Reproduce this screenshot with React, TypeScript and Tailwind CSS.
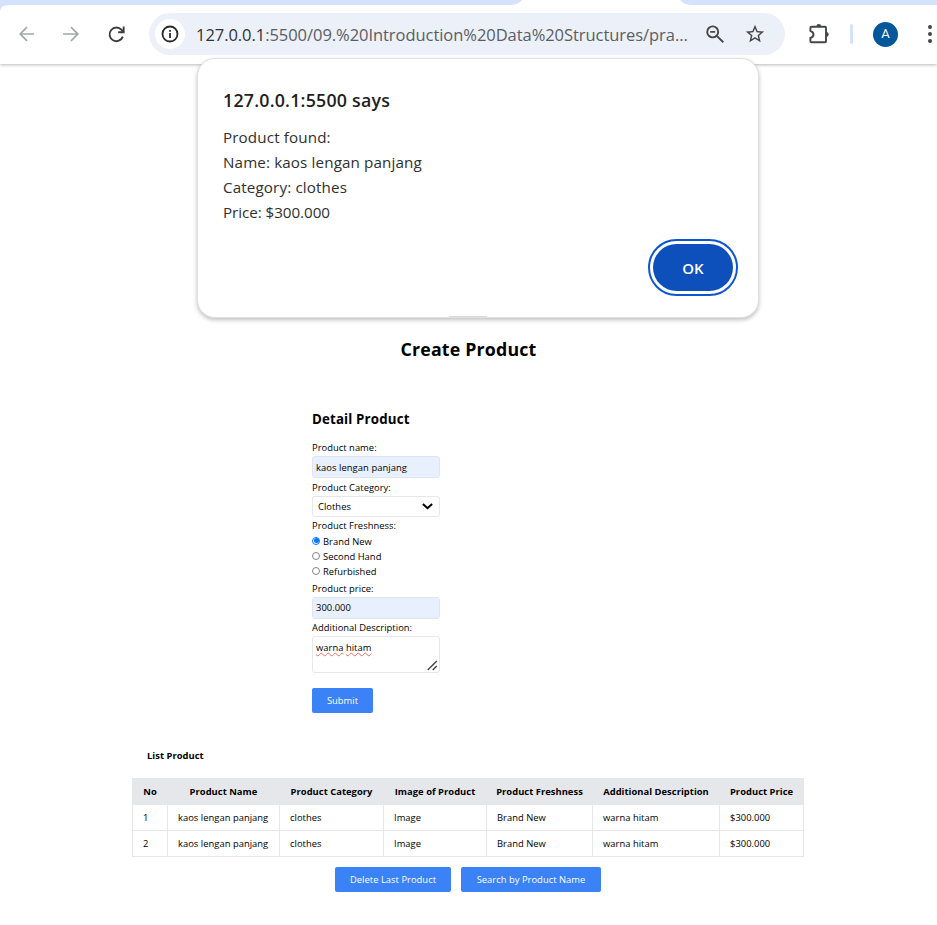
import React from "react";

const head = ["No", "Product Name", "Product Category", "Image of Product", "Product Freshness", "Additional Description", "Product Price"];
const rows = [
  ["1", "kaos lengan panjang", "clothes", "Image", "Brand New", "warna hitam", "$300.000"],
  ["2", "kaos lengan panjang", "clothes", "Image", "Brand New", "warna hitam", "$300.000"],
];

function Toolbar() {
  return (
    <header className="h-16 bg-white shadow-[0_1px_3px_rgba(0,0,0,0.28)]">
      <div className="flex h-[5px] justify-between">
        <svg width="522" height="14" viewBox="0 0 522 14" className="shrink-0">
          <path d="M0 0H522Q518 5 510 5H9Q0 5 0 12Z" fill="#d3e3fd" />
        </svg>
        <svg width="257" height="5" viewBox="0 0 257 5" className="shrink-0">
          <path d="M0 0Q4 5 12 5H257V0Z" fill="#d3e3fd" />
        </svg>
      </div>
      <div className="flex h-[58px] items-center">
        <svg className="ml-[19px] shrink-0" width="16" height="16" viewBox="0 0 16 16" fill="none" stroke="#a5a6a7" strokeWidth="1.7">
          <path d="M15 8H1.6M8 1.2L1.2 8L8 14.8" />
        </svg>
        <svg className="ml-[28px] shrink-0" width="16" height="16" viewBox="0 0 16 16" fill="none" stroke="#a5a6a7" strokeWidth="1.7">
          <path d="M0 8H14.4M8 1.2L14.8 8L8 14.8" />
        </svg>
        <svg className="ml-[29px] mr-[1px] shrink-0" width="17" height="17" viewBox="0 0 18 18" fill="none" stroke="#3c3d3e" strokeWidth="2">
          <path d="M15.7 11.2A7.2 7.2 0 1 1 14.4 4.2L15.8 6" />
          <path d="M16.6 0.6V6.6H10.8" />
        </svg>
        <div className="ml-[23px] flex h-[42px] w-[636px] shrink-0 items-center rounded-full bg-[#ecf0f9] pl-[6px]">
          <div className="flex size-[30px] shrink-0 items-center justify-center rounded-full bg-white">
            <svg width="18" height="18" viewBox="0 0 18 18" fill="none" stroke="#28292b" strokeWidth="1.8">
              <circle cx="9" cy="9" r="7.5" />
              <path d="M9 8V13M9 5V6.8" />
            </svg>
          </div>
          <div className="ml-[11px] w-[493px] whitespace-nowrap pt-px text-[16.5px] leading-6 tracking-[-0.05px] text-[#5a5d62]">
            <span className="text-[#303236]">127.0.0.1</span>:5500/09.%20Introduction%20Data%20Structures/pra...
          </div>
          <svg className="ml-4 shrink-0" width="20" height="20" viewBox="0 0 20 20" fill="none" stroke="#444648" strokeWidth="1.9">
            <circle cx="7.7" cy="7.9" r="5.5" />
            <path d="M11.8 11.9L18.3 18.3M5.2 7.9H10.2" />
          </svg>
          <svg className="ml-[19px] shrink-0" width="22" height="22" viewBox="0 0 24 24" fill="#444648">
            <path d="M22 9.24l-7.19-.62L12 2 9.19 8.63 2 9.24l5.46 4.73L5.82 21 12 17.27 18.18 21l-1.63-7.03L22 9.24zM12 15.4l-3.76 2.27 1-4.28-3.32-2.88 4.38-.38L12 6.1l1.71 4.04 4.38.38-3.32 2.88 1 4.28L12 15.4z" />
          </svg>
        </div>
        <svg className="ml-[23px] shrink-0" width="22" height="22" viewBox="0 0 22 22">
          <path d="M3.4 3.7H17Q18 3.7 18 4.7V18.2Q18 19.2 17 19.2H3.4Q2.4 19.2 2.4 18.2V15Q5.5 13.8 5.5 11.4T2.4 7.8V4.7Q2.4 3.7 3.4 3.7Z" fill="none" stroke="#444648" strokeWidth="1.9" />
          <path d="M8.4 3.5A2.4 2.4 0 0 1 13.2 3.5ZM18.3 9A2.4 2.4 0 0 1 18.3 13.8Z" fill="#444648" />
        </svg>
        <div className="ml-[20px] h-5 w-[3px] shrink-0 rounded-full bg-[#d3e3fd]" />
        <div className="ml-[20px] flex size-[25px] shrink-0 items-center justify-center rounded-full bg-[#01579b] font-['Roboto',sans-serif] text-[13px] text-white">A</div>
        <svg className="ml-[30px] shrink-0" width="4" height="20" viewBox="0 0 4 20" fill="#444648">
          <circle cx="2" cy="3" r="2" />
          <circle cx="2" cy="10" r="2" />
          <circle cx="2" cy="17" r="2" />
        </svg>
      </div>
    </header>
  );
}

function Dialog() {
  return (
    <div className="absolute left-[197px] top-[58px] flex h-[260px] w-[562px] flex-col rounded-[18px] border border-[#e0e2e2] bg-white pl-[25px] pr-5 pt-7 shadow-[0_2px_4px_rgba(0,0,0,0.25)]">
      <h2 className="whitespace-nowrap text-[17.8px] font-semibold leading-[26px] tracking-[0.22px] text-[#1f1f1f]">127.0.0.1:5500 says</h2>
      <div className="mt-3 text-[15.2px] leading-[25px] tracking-[0.13px] text-[#303030]">
        <p>Product found:</p>
        <p>Name: kaos lengan panjang</p>
        <p>Category: clothes</p>
        <p className="tracking-[-0.05px]">Price: $300.000</p>
      </div>
      <button className="mt-[14px] flex h-[57px] w-[90px] shrink-0 items-center justify-center self-end rounded-full border-2 border-[#0b57d0] bg-white p-[3px]">
        <span className="flex size-full items-center justify-center rounded-full bg-[#0e50bb] pt-px text-[15px] font-semibold text-white">OK</span>
      </button>
      <div className="ml-[226px] mt-5 h-px w-[38px] bg-[#ddd5ec]" />
    </div>
  );
}

function Radio({ label, on = false }: { label: string; on?: boolean }) {
  return (
    <label className="flex h-[15px] items-center">
      <span className={on ? "mb-[2px] flex size-2 items-center justify-center rounded-full border border-[#0075ff]" : "mb-[2px] size-2 rounded-full border border-[#858585]"}>
        {on && <span className="size-[5px] rounded-full bg-[#0075ff]" />}
      </span>
      <span className="ml-[3px] pt-[2px]">{label}</span>
    </label>
  );
}

function Squiggle({ children }: { children: React.ReactNode }) {
  return <span className="underline decoration-[#f06a6a] decoration-wavy decoration-[0.5px] underline-offset-1">{children}</span>;
}

function Form() {
  return (
    <section className="ml-[312px] mt-[46px] w-32">
      <h2 className="whitespace-nowrap text-[13.3px] font-bold leading-5 tracking-[0.15px]">Detail Product</h2>
      <div className="mt-[11px] h-4 leading-4">Product name:</div>
      <div className="flex h-[22px] items-center rounded-[3px] border border-[#e0e4ee] bg-[#e8f0fe] pl-[3px] pt-[2px] tracking-[0.07px]">kaos lengan panjang</div>
      <div className="mt-[2px] h-4 leading-4">Product Category:</div>
      <div className="flex h-[21px] items-center justify-between rounded-[3px] border border-[#e5e7eb] pl-[5px] pr-[6px]">
        <span className="pt-px">Clothes</span>
        <svg width="11" height="7" viewBox="0 0 11 7" fill="none" stroke="#000" strokeWidth="2">
          <path d="M0.9 1L5.5 5.2L10.1 1" />
        </svg>
      </div>
      <div className="h-[17px] leading-[17px]">Product Freshness:</div>
      <Radio label="Brand New" on />
      <Radio label="Second Hand" />
      <Radio label="Refurbished" />
      <div className="h-[18px] leading-[20px]">Product price:</div>
      <div className="flex h-[22px] items-center rounded-[3px] border border-[#e0e4ee] bg-[#e8f0fe] pl-[3px]">300.000</div>
      <div className="h-[17px] whitespace-nowrap leading-[17px]">Additional Description:</div>
      <div className="flex h-[37px] items-end justify-between rounded-[3px] border border-[#e5e7eb] pl-[3px] pr-px">
        <span className="self-start pt-[3px] leading-4">
          <Squiggle>warna</Squiggle> <Squiggle>hitam</Squiggle>
        </span>
        <svg width="11" height="12" viewBox="0 0 11 12" fill="none" stroke="#444" strokeWidth="1.4">
          <path d="M0.7 10L9.8 1M5.7 10L9.8 6" />
        </svg>
      </div>
      <button className="mt-[15px] block h-[25px] w-[61px] rounded-[2px] bg-[#3b82f6] pt-px text-white">Submit</button>
    </section>
  );
}

function ProductTable() {
  const cols = "grid grid-cols-[35px_112px_104px_103px_106px_127px_84px]";
  return (
    <div className="ml-[132px] mt-[13px] w-[672px] border-r border-[#e5e7eb]">
      <div className={`${cols} h-[27px] items-center bg-[#e5e7eb] pt-px font-bold`}>
        {head.map((h) => (
          <div key={h} className="whitespace-nowrap pl-px text-center">{h}</div>
        ))}
      </div>
      {rows.map((r) => (
        <div key={r[0]} className={`${cols} h-[26px] border-b border-[#e5e7eb]`}>
          {r.map((c, i) => (
            <div key={i} className="flex items-center whitespace-nowrap border-l border-[#e5e7eb] pl-[10px] pt-px">{c}</div>
          ))}
        </div>
      ))}
    </div>
  );
}

export default function App() {
  return (
    <div className="relative h-[925px] w-[937px] overflow-hidden bg-white font-['Open_Sans',sans-serif] text-[9.4px] tracking-[0.03px] text-black">
      <Toolbar />
      <main>
        <h1 className="mt-[271px] text-center text-[17.8px] font-bold leading-7 tracking-[0.17px]">Create Product</h1>
        <Form />
        <h3 className="ml-[147px] mt-[34px] h-[18px] font-bold leading-[18px]">List Product</h3>
        <ProductTable />
        <div className="ml-[335px] mt-[10px] flex gap-[10px]">
          <button className="h-[25px] w-[116px] rounded-[2px] bg-[#3b82f6] pt-px text-white">Delete Last Product</button>
          <button className="h-[25px] w-[140px] rounded-[2px] bg-[#3b82f6] pt-px text-white">Search by Product Name</button>
        </div>
      </main>
      <Dialog />
    </div>
  );
}
